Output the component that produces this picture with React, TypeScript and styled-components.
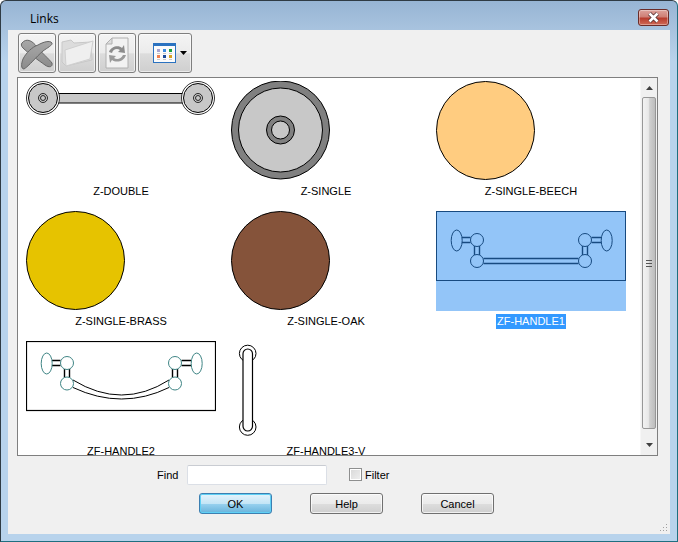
import React from "react";
import styled, { createGlobalStyle } from "styled-components";

const GlobalStyle = createGlobalStyle`
    html, body {
        margin: 0;
        padding: 0;
        background: #ffffff;
    }
`;

const Frame = styled.div`
    position: relative;
    box-sizing: border-box;
    width: 678px;
    height: 542px;
    display: flex;
    flex-direction: column;
    overflow: hidden;
    padding: 0 7px 7px 7px;
    border: 1px solid #2f3b44;
    border-right-color: #1f6f80;
    border-bottom-color: #1f6f80;
    border-radius: 6px 6px 0 0;
    background: linear-gradient(to bottom, #97b5d4 0, #a9c4df 30px, #b8d3ec 60px, #b8d3ec 100%);
    font-family: "Liberation Sans", Arial, sans-serif;
    font-size: 11px;
    color: #000000;
`;

const TitleBar = styled.div`
    box-sizing: border-box;
    height: 29px;
    flex: none;
    display: flex;
    align-items: center;
    justify-content: space-between;
    padding: 6px 1px 0 22px;
`;

const Title = styled.span`
    font-family: "Open Sans", "Liberation Sans", sans-serif;
    font-size: 12px;
`;

const CloseButton = styled.div`
    box-sizing: border-box;
    width: 31px;
    height: 17px;
    margin-top: -2px;
    display: flex;
    align-items: center;
    justify-content: center;
    border: 1px solid #6b2c28;
    border-radius: 3px;
    background: linear-gradient(to bottom, #dda39c 0, #cf7f75 45%, #b83d2e 55%, #cf6a57 100%);
    box-shadow: inset 0 0 0 1px rgba(255, 255, 255, 0.35);
`;

const Client = styled.div`
    flex: 1;
    display: flex;
    flex-direction: column;
    background: #f0f0f0;
    padding: 3px 12px 0 9px;
    min-height: 0;
`;

const Toolbar = styled.div`
    display: flex;
    gap: 2px;
    height: 40px;
    flex: none;
    padding-left: 1px;
`;

const ToolButton = styled.div<{ $wide?: boolean }>`
    box-sizing: border-box;
    width: ${props => (props.$wide ? "54px" : "38px")};
    height: 40px;
    display: flex;
    align-items: center;
    justify-content: ${props => (props.$wide ? "flex-start" : "center")};
    padding-left: ${props => (props.$wide ? "12px" : "0")};
    border: 1px solid #7f7f7f;
    border-radius: 3px;
    background: linear-gradient(to bottom, #f4f4f4 0, #ebebeb 50%, #dcdcdc 52%, #cfcfcf 100%);
    box-shadow: inset 0 0 0 1px rgba(255, 255, 255, 0.6);
`;

const ListBox = styled.div`
    box-sizing: border-box;
    width: 641px;
    height: 379px;
    margin-top: 4px;
    flex: none;
    display: flex;
    border: 1px solid #7f7f7f;
    background: #ffffff;
`;

const ThumbGrid = styled.div`
    flex: 1;
    overflow: hidden;
    display: grid;
    grid-template-columns: repeat(3, 190px);
    grid-auto-rows: 130px;
    column-gap: 15px;
    padding: 3px 0 0 8px;
`;

const Cell = styled.div`
    display: flex;
    flex-direction: column;
    align-items: center;
`;

const Thumb = styled.svg<{ $selected?: boolean }>`
    display: block;
    width: 190px;
    height: 100px;
    flex: none;
    background: ${props => (props.$selected ? "#93c5f8" : "transparent")};
`;

const Label = styled.span<{ $selected?: boolean }>`
    margin-top: 3px;
    height: 15px;
    line-height: 15px;
    padding: 0 1px;
    white-space: nowrap;
    font-size: 11px;
    color: ${props => (props.$selected ? "#ffffff" : "#000000")};
    background: ${props => (props.$selected ? "#3399ff" : "transparent")};
`;

const Scrollbar = styled.div`
    width: 17px;
    flex: none;
    display: flex;
    flex-direction: column;
    background: #f0f0f0;
    border-left: 1px solid #f7f7f7;
    box-sizing: border-box;
`;

const ScrollArrow = styled.div<{ $down?: boolean }>`
    box-sizing: border-box;
    height: ${props => (props.$down ? "26px" : "19px")};
    padding-top: ${props => (props.$down ? "6px" : "0")};
    flex: none;
    display: flex;
    align-items: center;
    justify-content: center;
`;

const ScrollThumb = styled.div`
    flex: 1;
    box-sizing: border-box;
    margin: 0 1px;
    display: flex;
    align-items: center;
    justify-content: center;
    border: 1px solid #979797;
    border-radius: 2px;
    background: linear-gradient(to right, #f2f2f2 0, #e8e8e8 45%, #d0d0d0 55%, #bdbdbd 100%);
`;

const Grip = styled.div`
    width: 6px;
    height: 5px;
    border-top: 1px solid #555555;
    border-bottom: 1px solid #555555;

    &::after {
        content: "";
        display: block;
        height: 1px;
        margin-top: 2px;
        background: #555555;
    }
`;

const FindRow = styled.div`
    display: flex;
    align-items: center;
    height: 19px;
    margin-top: 9px;
    padding-left: 140px;
    flex: none;
`;

const FindLabel = styled.label`
    width: 30px;
    font-size: 11px;
`;

const FindInput = styled.input`
    box-sizing: border-box;
    width: 140px;
    height: 20px;
    padding: 0 3px;
    border: 1px solid #dbdfe6;
    border-top-color: #c9ccd2;
    border-radius: 2px;
    background: #ffffff;
    outline: none;
`;

const FilterBox = styled.span`
    box-sizing: border-box;
    width: 13px;
    height: 13px;
    margin-left: 22px;
    border: 1px solid #8e8f8f;
    background: linear-gradient(135deg, #d8d8d8 0, #f0f0f0 100%);
    box-shadow: inset 0 0 0 1px #ffffff;
`;

const FilterLabel = styled.span`
    margin-left: 3px;
    font-size: 11px;
`;

const ButtonRow = styled.div`
    display: flex;
    margin-top: 9px;
    padding-left: 182px;
    gap: 38px;
    flex: none;
`;

const DialogButton = styled.button<{ $primary?: boolean }>`
    box-sizing: border-box;
    width: 73px;
    height: 21px;
    padding: 0;
    font-family: "Liberation Sans", Arial, sans-serif;
    font-size: 11px;
    color: #000000;
    border-radius: 3px;
    border: 1px solid ${props => (props.$primary ? "#3c7fb1" : "#707070")};
    background: ${props =>
        props.$primary
            ? "linear-gradient(to bottom, #e5f4fc 0, #c4e5f6 50%, #98d1ef 52%, #68b3db 100%)"
            : "linear-gradient(to bottom, #f2f2f2 0, #ebebeb 50%, #dddddd 52%, #cfcfcf 100%)"};
    box-shadow: inset 0 0 0 1px ${props => (props.$primary ? "#5fd0f5" : "rgba(255,255,255,0.7)")};
`;

const ResizeGrip = styled.svg`
    position: absolute;
    right: 9px;
    bottom: 9px;
`;

const XIcon = () => (
    <svg width="34" height="33" viewBox="0 0 34 33">
        <defs>
            <linearGradient id="xg" x1="0" y1="0" x2="0" y2="1">
                <stop offset="0" stopColor="#a8a8a8" />
                <stop offset="1" stopColor="#8c8c8c" />
            </linearGradient>
        </defs>
        <path
            d="M2 6 C6 1 12 3 17 10 C21 15 29 22 32 26 C33 30 29 31 25 28 C18 23 8 16 3 11 C1 9 1 7 2 6Z"
            fill="url(#xg)"
            stroke="#666666"
        />
        <path
            d="M32 6 C33 8 27 11 23 14 C16 20 9 29 4 32 C1 32 1 27 3 22 C6 16 12 10 18 8 C23 5 30 3 32 6Z"
            fill="url(#xg)"
            stroke="#666666"
        />
    </svg>
);

const FolderIcon = () => (
    <svg width="34" height="30" viewBox="0 0 34 30">
        <path d="M2 4 L11 2 L14 5 L31 4 L32 22 L6 28 L2 24Z" fill="#dcdcdc" stroke="#c8c8c8" />
        <path d="M5 12 L33 3 L30 21 L6 28Z" fill="#efefef" stroke="#cfcfcf" />
    </svg>
);

const RefreshIcon = () => (
    <svg width="26" height="32" viewBox="0 0 26 32">
        <path d="M8 1 H24 V31 H2 V7Z" fill="#f2f2f2" stroke="#b0b0b0" />
        <path d="M8 1 V7 H2Z" fill="#dddddd" stroke="#b0b0b0" />
        <path
            d="M5 15 C7 9 15 8 18 11 L20 8 L21 16 L14 15 L16 13 C13 11 9 12 8 16Z"
            fill="#8c8c8c"
        />
        <path
            d="M22 18 C20 25 12 26 8 23 L6 26 L5 18 L12 19 L10 21 C13 23 17 22 19 18Z"
            fill="#9a9a9a"
        />
    </svg>
);

const ViewIcon = () => (
    <svg width="40" height="20" viewBox="0 0 40 20">
        <rect x="2.5" y="0.5" width="22" height="19" fill="#fbfbfb" stroke="#2a72c0" />
        <rect x="2" y="0" width="23" height="3" fill="#2a72c0" />
        <rect x="6" y="6" width="3" height="3" fill="#a8a4d0" />
        <rect x="12" y="6" width="3" height="3" fill="#3a8be0" />
        <rect x="18" y="6" width="3" height="3" fill="#1aa040" />
        <rect x="6" y="12" width="3" height="3" fill="#f08050" />
        <rect x="12" y="12" width="3" height="3" fill="#1a4a9a" />
        <rect x="18" y="12" width="3" height="3" fill="#d8a020" />
        <path d="M6 10.5 H9 M12 10.5 H15 M18 10.5 H21 M6 16.5 H9 M12 16.5 H15 M18 16.5 H21" stroke="#c8c8c8" />
        <path d="M29 8 H36 L32.5 12Z" fill="#000000" />
    </svg>
);

const DoubleThumb = () => (
    <>
        <rect x="30" y="12.5" width="130" height="9.5" fill="#c8c8c8" stroke="#000" />
        {[17, 172].map(cx => (
            <g key={cx} fill="none" stroke="#000">
                <circle cx={cx} cy="17" r="16.5" strokeWidth="0.8" fill="#fff" />
                <circle cx={cx} cy="17" r="14.5" fill="#c8c8c8" />
                <circle cx={cx} cy="17" r="4.5" strokeWidth="0.8" />
                <circle cx={cx} cy="17" r="2.5" strokeWidth="0.8" />
            </g>
        ))}
    </>
);

const SingleThumb = () => (
    <g stroke="#000">
        <circle cx="49.5" cy="49" r="49" fill="#808080" />
        <circle cx="49.5" cy="49" r="42" fill="#c8c8c8" />
        <circle cx="49.5" cy="49" r="14" fill="#808080" />
        <circle cx="49.5" cy="49" r="9" fill="#c8c8c8" />
    </g>
);

const DiscThumb = ({ fill }: { fill: string }) => (
    <circle cx="49.5" cy="49.5" r="49" fill={fill} stroke="#000" />
);

const HandleKnobs = ({ stroke, y1, y2 }: { stroke: string; y1: number; y2: number }) => (
    <g fill="none" stroke={stroke}>
        <ellipse cx="20.7" cy={y1 + 0.5} rx="5.5" ry="10.5" />
        <circle cx="41" cy={y1} r="6.5" />
        <circle cx="41" cy={y2} r="6.5" />
        <circle cx="149" cy={y1} r="6.5" />
        <circle cx="149" cy={y2} r="6.5" />
        <ellipse cx="170.7" cy={y1 + 0.5} rx="5.5" ry="10.5" />
    </g>
);

const HandleBars = ({ stroke, y1, y2 }: { stroke: string; y1: number; y2: number }) => (
    <path
        d={`M26 ${y1 - 2.5} H34.5 M26 ${y1 + 2.5} H34.5 M38.5 ${y1 + 6} V${y2 - 6} M43.5 ${y1 + 6} V${y2 - 6}
            M155.5 ${y1 - 2.5} H165 M155.5 ${y1 + 2.5} H165 M146.5 ${y1 + 6} V${y2 - 6} M151.5 ${y1 + 6} V${y2 - 6}`}
        fill="none"
        stroke={stroke}
        strokeWidth="1.4"
    />
);

const Handle1Thumb = () => (
    <g>
        <rect x="0.5" y="0.5" width="189" height="69" fill="none" stroke="#174a80" />
        <HandleBars stroke="#174a80" y1={29} y2={50} />
        <path d="M47.5 47.5 H142.5 M47.5 52.5 H142.5" fill="none" stroke="#174a80" strokeWidth="1.4" />
        <HandleKnobs stroke="#174a80" y1={29} y2={50} />
    </g>
);

const Handle2Thumb = () => (
    <g>
        <rect x="0.5" y="0.5" width="189" height="69" fill="none" stroke="#000" strokeWidth="1.2" />
        <HandleBars stroke="#000" y1={22} y2={42.5} />
        <path
            d="M47 39 Q96 69 143 39 M47 46.5 Q96 69.5 143 46.5"
            fill="none"
            stroke="#000"
        />
        <HandleKnobs stroke="#3f8585" y1={22} y2={42.5} />
    </g>
);

const Handle3Thumb = () => (
    <g stroke="#000" fill="none">
        <circle cx="16.7" cy="12.5" r="8.3" />
        <circle cx="16.7" cy="86" r="8.3" />
        <rect x="12" y="8" width="9.5" height="82" rx="4.75" fill="#fff" strokeWidth="1.2" />
    </g>
);

const items: { name: string; art: React.ReactNode; selected?: boolean }[] = [
    { name: "Z-DOUBLE", art: <DoubleThumb /> },
    { name: "Z-SINGLE", art: <SingleThumb /> },
    { name: "Z-SINGLE-BEECH", art: <DiscThumb fill="#ffcc80" /> },
    { name: "Z-SINGLE-BRASS", art: <DiscThumb fill="#e6c300" /> },
    { name: "Z-SINGLE-OAK", art: <DiscThumb fill="#85533a" /> },
    { name: "ZF-HANDLE1", art: <Handle1Thumb />, selected: true },
    { name: "ZF-HANDLE2", art: <Handle2Thumb /> },
    { name: "ZF-HANDLE3-V", art: <Handle3Thumb /> }
];

const App = () => {
    return (
        <>
            <GlobalStyle />
            <Frame>
                <TitleBar>
                    <Title>Links</Title>
                    <CloseButton>
                        <svg width="13" height="11" viewBox="0 0 13 11">
                            <path
                                d="M2.5 1.5 L10.5 9.5 M10.5 1.5 L2.5 9.5"
                                stroke="#4a2a2a"
                                strokeWidth="4"
                            />
                            <path
                                d="M2.5 1.5 L10.5 9.5 M10.5 1.5 L2.5 9.5"
                                stroke="#ffffff"
                                strokeWidth="2.6"
                            />
                        </svg>
                    </CloseButton>
                </TitleBar>
                <Client>
                    <Toolbar>
                        <ToolButton><XIcon /></ToolButton>
                        <ToolButton><FolderIcon /></ToolButton>
                        <ToolButton><RefreshIcon /></ToolButton>
                        <ToolButton $wide><ViewIcon /></ToolButton>
                    </Toolbar>
                    <ListBox>
                        <ThumbGrid>
                            {items.map(item => (
                                <Cell key={item.name}>
                                    <Thumb viewBox="0 0 190 100" $selected={item.selected}>
                                        {item.art}
                                    </Thumb>
                                    <Label $selected={item.selected}>{item.name}</Label>
                                </Cell>
                            ))}
                        </ThumbGrid>
                        <Scrollbar>
                            <ScrollArrow>
                                <svg width="7" height="4" viewBox="0 0 7 4">
                                    <path d="M0 4 H7 L3.5 0Z" fill="#404040" />
                                </svg>
                            </ScrollArrow>
                            <ScrollThumb><Grip /></ScrollThumb>
                            <ScrollArrow $down>
                                <svg width="7" height="4" viewBox="0 0 7 4">
                                    <path d="M0 0 H7 L3.5 4Z" fill="#404040" />
                                </svg>
                            </ScrollArrow>
                        </Scrollbar>
                    </ListBox>
                    <FindRow>
                        <FindLabel>Find</FindLabel>
                        <FindInput />
                        <FilterBox />
                        <FilterLabel>Filter</FilterLabel>
                    </FindRow>
                    <ButtonRow>
                        <DialogButton $primary>OK</DialogButton>
                        <DialogButton>Help</DialogButton>
                        <DialogButton>Cancel</DialogButton>
                    </ButtonRow>
                </Client>
                <ResizeGrip width="9" height="9" viewBox="0 0 9 9">
                    <path
                        d="M7 1 h1 v1 h-1z M4 4 h1 v1 h-1z M7 4 h1 v1 h-1z M1 7 h1 v1 h-1z M4 7 h1 v1 h-1z M7 7 h1 v1 h-1z"
                        fill="#a0a0a0"
                    />
                </ResizeGrip>
            </Frame>
        </>
    );
};

export default App;
